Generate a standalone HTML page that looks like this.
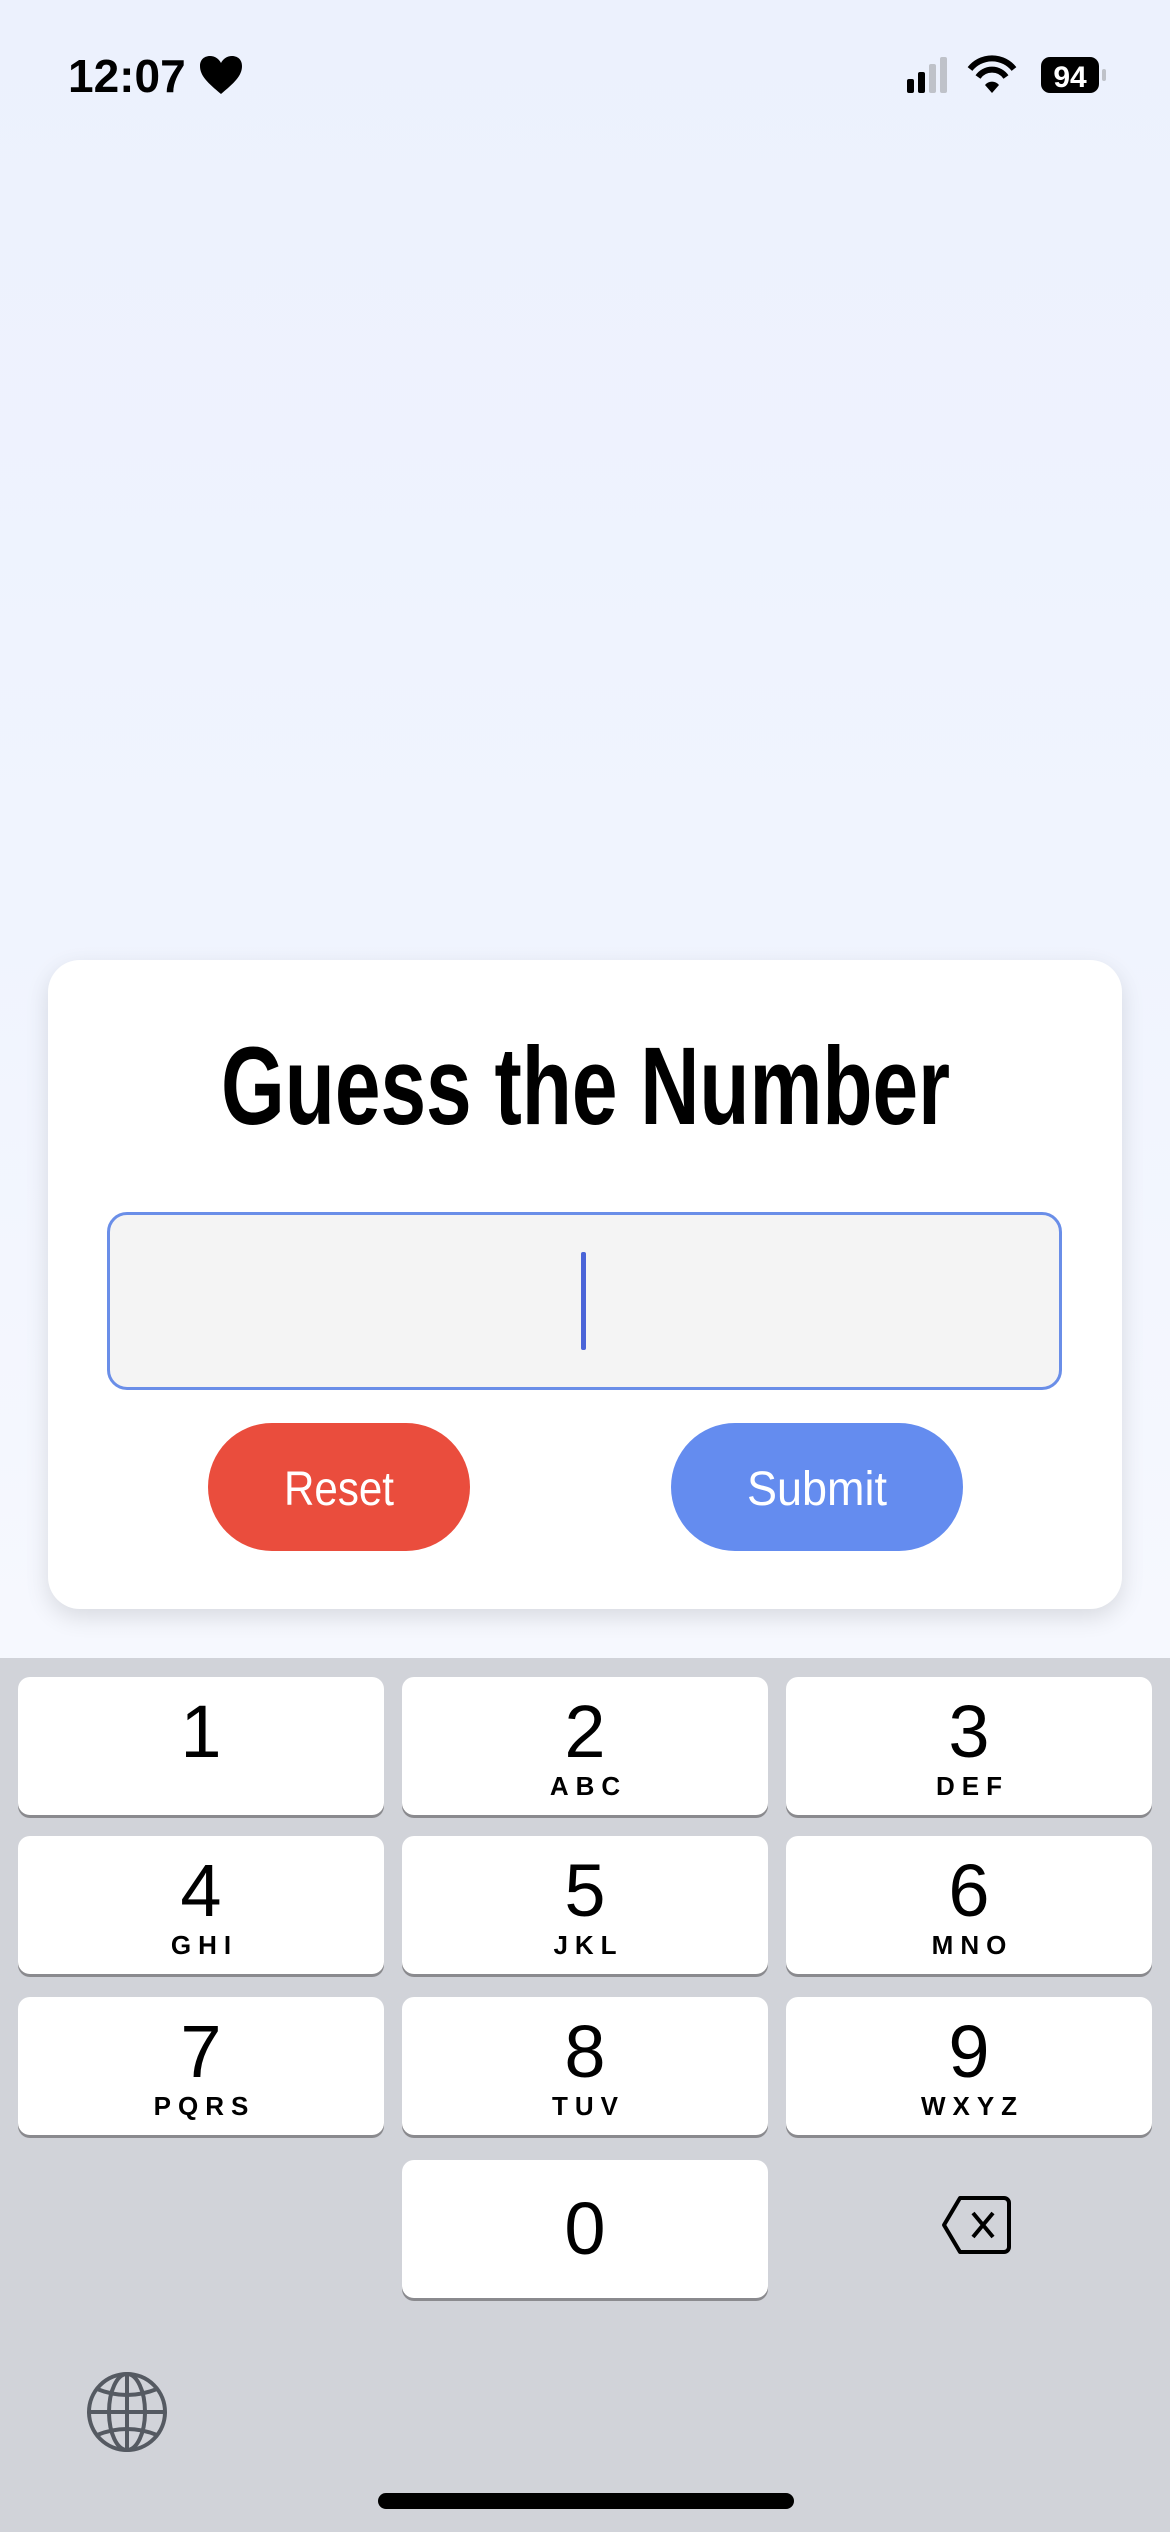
<!DOCTYPE html>
<html><head><meta charset="utf-8"><style>
*{margin:0;padding:0;box-sizing:border-box}
body{width:1170px;height:2532px;position:relative;overflow:hidden;font-family:"Liberation Sans",sans-serif;background:linear-gradient(#ecf1fd 0,#f0f4fe 900px,#f6f8fe 1650px)}
.a{position:absolute}
.card{left:48px;top:960px;width:1074px;height:649px;background:#fff;border-radius:32px;box-shadow:0 8px 24px rgba(0,0,0,.12)}
.inp{left:107px;top:1212px;width:955px;height:178px;background:#f4f4f4;border:3px solid #6a8ee8;border-radius:20px}
.kb{left:0;top:1658px;width:1170px;height:874px;background:#d1d3d9}
.key{position:absolute;width:366px;height:138px;background:#fff;border-radius:12px;box-shadow:0 3px 0 #8a8a8e;text-align:center}
.d{position:absolute;left:0;right:0;font-size:74px;line-height:1;color:#000}
.l{position:absolute;left:0;right:0;font-size:26px;font-weight:bold;letter-spacing:7px;padding-left:7px;line-height:1}
</style></head><body>
<div class="a" style="left:68px;top:49px;font-size:46px;font-weight:bold;letter-spacing:0px">12:07</div>
<svg class="a" style="left:200px;top:56px" width="42" height="38" viewBox="0 0 42 38"><path d="M21 38 C8 27 0 20 0 10 C0 3 5 0 10 0 C15 0 19 3 21 7 C23 3 27 0 32 0 C37 0 42 3 42 10 C42 20 34 27 21 38Z"/></svg>
<svg class="a" style="left:905px;top:55px" width="210" height="40" viewBox="0 0 210 40">
<rect x="2" y="24" width="7" height="14" rx="2"/><rect x="13" y="17" width="7" height="21" rx="2"/><rect x="24" y="9" width="7" height="29" rx="2" fill="#bfc2c9"/><rect x="35" y="2" width="7" height="36" rx="2" fill="#bfc2c9"/>
<path d="M65 14 A28 28 0 0 1 109 14" stroke="#000" stroke-width="6" fill="none"/><path d="M73 22 A17 17 0 0 1 101 22" stroke="#000" stroke-width="6" fill="none"/><path d="M80 30 L87 38 L94 30 A9 9 0 0 0 80 30Z"/>
<rect x="136" y="2" width="58" height="36" rx="9"/><rect x="197" y="14" width="4" height="12" rx="2" fill="#bfc2c9"/>
<text x="165" y="32" font-size="30" font-weight="bold" fill="#fff" text-anchor="middle" font-family="Liberation Sans">94</text></svg>
<div class="a card"></div>
<svg class="a" style="left:0;top:1020px" width="1170" height="120"><text x="221" y="104" textLength="729" lengthAdjust="spacingAndGlyphs" font-size="110" font-weight="bold" font-family="Liberation Sans">Guess the Number</text></svg>
<div class="a inp"></div>
<div class="a" style="left:581px;top:1252px;width:5px;height:98px;background:#4a64d8;border-radius:2px"></div>
<div class="a" style="left:208px;top:1423px;width:262px;height:128px;background:#ea4d3d;border-radius:64px"></div>
<div class="a" style="left:671px;top:1423px;width:292px;height:128px;background:#648cef;border-radius:64px"></div>
<svg class="a" style="left:0;top:1423px" width="1170" height="128"><text x="339" y="82" text-anchor="middle" font-size="48" fill="#fff" font-family="Liberation Sans" textLength="110" lengthAdjust="spacingAndGlyphs">Reset</text><text x="817" y="82" text-anchor="middle" font-size="48" fill="#fff" font-family="Liberation Sans" textLength="140" lengthAdjust="spacingAndGlyphs">Submit</text></svg>
<div class="a kb"></div>
<div class="key" style="left:18px;top:1677px"><div class="d" style="top:18px">1</div></div>
<div class="key" style="left:402px;top:1677px"><div class="d" style="top:18px">2</div><div class="l" style="top:96px">ABC</div></div>
<div class="key" style="left:786px;top:1677px"><div class="d" style="top:18px">3</div><div class="l" style="top:96px">DEF</div></div>
<div class="key" style="left:18px;top:1836px"><div class="d" style="top:18px">4</div><div class="l" style="top:96px">GHI</div></div>
<div class="key" style="left:402px;top:1836px"><div class="d" style="top:18px">5</div><div class="l" style="top:96px">JKL</div></div>
<div class="key" style="left:786px;top:1836px"><div class="d" style="top:18px">6</div><div class="l" style="top:96px">MNO</div></div>
<div class="key" style="left:18px;top:1997px"><div class="d" style="top:18px">7</div><div class="l" style="top:96px">PQRS</div></div>
<div class="key" style="left:402px;top:1997px"><div class="d" style="top:18px">8</div><div class="l" style="top:96px">TUV</div></div>
<div class="key" style="left:786px;top:1997px"><div class="d" style="top:18px">9</div><div class="l" style="top:96px">WXYZ</div></div>
<div class="key" style="left:402px;top:2160px"><div class="d" style="top:32px">0</div></div>
<svg class="a" style="left:940px;top:2195px" width="72" height="60" viewBox="0 0 72 60"><path d="M20 3 H64 a5 5 0 0 1 5 5 V52 a5 5 0 0 1 -5 5 H20 L4 30 Z" fill="none" stroke="#000" stroke-width="4" stroke-linejoin="round"/><path d="M33 18 L53 42 M53 18 L33 42" stroke="#000" stroke-width="4"/></svg>
<svg class="a" style="left:86px;top:2371px" width="82" height="82" viewBox="0 0 82 82" fill="none" stroke="#555a62" stroke-width="4"><circle cx="41" cy="41" r="38"/><ellipse cx="41" cy="41" rx="18" ry="38"/><line x1="41" y1="3" x2="41" y2="79"/><line x1="3" y1="41" x2="79" y2="41"/><path d="M11 18 Q41 30 71 18 M11 64 Q41 52 71 64"/></svg>
<div class="a" style="left:378px;top:2493px;width:416px;height:16px;background:#000;border-radius:8px"></div>
</body></html>
